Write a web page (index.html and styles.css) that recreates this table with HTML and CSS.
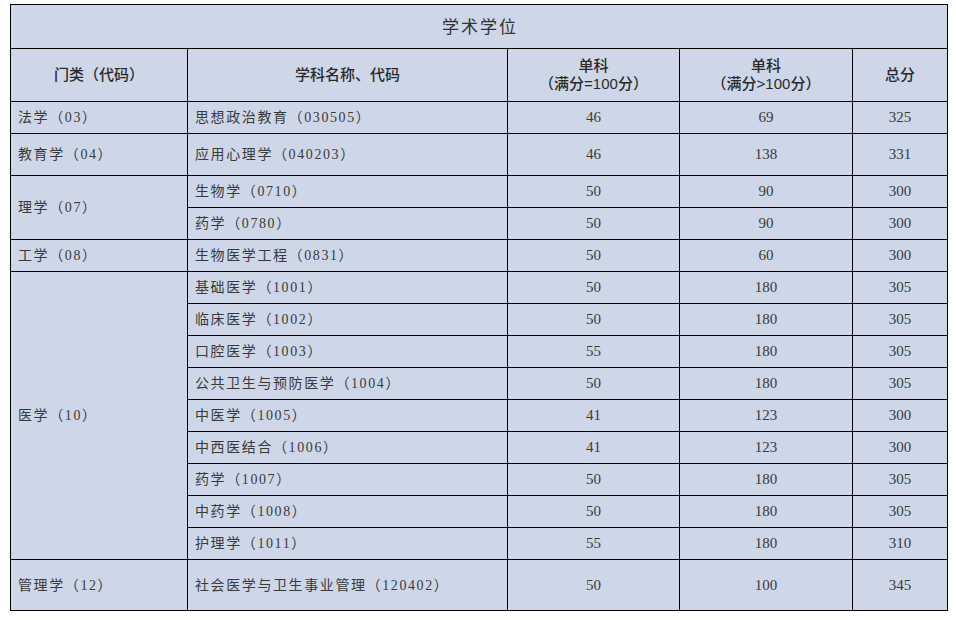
FILE: index.html
```html
<!DOCTYPE html>
<html lang="zh-CN">
<head>
<meta charset="utf-8">
<title>学术学位</title>
<link rel="stylesheet" href="styles.css">
</head>
<body>
<table class="grid">
  <colgroup>
    <col class="c1"><col class="c2"><col class="c3"><col class="c4"><col class="c5">
  </colgroup>
  <tr class="r-title"><td colspan="5" class="title">学术学位</td></tr>
  <tr class="r-head">
    <td class="hd">门类（代码）</td>
    <td class="hd">学科名称、代码</td>
    <td class="hd">单科<br>（满分=100分）</td>
    <td class="hd">单科<br>（满分&gt;100分）</td>
    <td class="hd">总分</td>
  </tr>
  <tr class="r"><td class="txt">法学（03）</td><td class="txt">思想政治教育（030505）</td><td class="num">46</td><td class="num">69</td><td class="num">325</td></tr>
  <tr class="r-tall"><td class="txt">教育学（04）</td><td class="txt">应用心理学（040203）</td><td class="num">46</td><td class="num">138</td><td class="num">331</td></tr>
  <tr class="r"><td class="txt" rowspan="2">理学（07）</td><td class="txt">生物学（0710）</td><td class="num">50</td><td class="num">90</td><td class="num">300</td></tr>
  <tr class="r"><td class="txt">药学（0780）</td><td class="num">50</td><td class="num">90</td><td class="num">300</td></tr>
  <tr class="r"><td class="txt">工学（08）</td><td class="txt">生物医学工程（0831）</td><td class="num">50</td><td class="num">60</td><td class="num">300</td></tr>
  <tr class="r"><td class="txt" rowspan="9">医学（10）</td><td class="txt">基础医学（1001）</td><td class="num">50</td><td class="num">180</td><td class="num">305</td></tr>
  <tr class="r"><td class="txt">临床医学（1002）</td><td class="num">50</td><td class="num">180</td><td class="num">305</td></tr>
  <tr class="r"><td class="txt">口腔医学（1003）</td><td class="num">55</td><td class="num">180</td><td class="num">305</td></tr>
  <tr class="r"><td class="txt">公共卫生与预防医学（1004）</td><td class="num">50</td><td class="num">180</td><td class="num">305</td></tr>
  <tr class="r"><td class="txt">中医学（1005）</td><td class="num">41</td><td class="num">123</td><td class="num">300</td></tr>
  <tr class="r"><td class="txt">中西医结合（1006）</td><td class="num">41</td><td class="num">123</td><td class="num">300</td></tr>
  <tr class="r"><td class="txt">药学（1007）</td><td class="num">50</td><td class="num">180</td><td class="num">305</td></tr>
  <tr class="r"><td class="txt">中药学（1008）</td><td class="num">50</td><td class="num">180</td><td class="num">305</td></tr>
  <tr class="r"><td class="txt">护理学（1011）</td><td class="num">55</td><td class="num">180</td><td class="num">310</td></tr>
  <tr class="r-last"><td class="txt">管理学（12）</td><td class="txt">社会医学与卫生事业管理（120402）</td><td class="num">50</td><td class="num">100</td><td class="num">345</td></tr>
</table>
</body>
</html>
```

FILE: styles.css
```css
html, body {
  margin: 0;
  padding: 0;
  background: #ffffff;
}

.grid {
  margin: 4px 0 0 10px;
  border-collapse: collapse;
  table-layout: fixed;
  width: 937px;
  background: #cdd7e8;
  font-family: "Liberation Serif", "Noto Sans CJK SC", serif;
  font-size: 14px;
  color: #3a3a3a;
}

.c1 { width: 177px; }
.c2 { width: 320px; }
.c3 { width: 172px; }
.c4 { width: 173px; }
.c5 { width: 95px; }

.grid td {
  border: 1px solid #000000;
  padding: 0;
  vertical-align: middle;
  line-height: 17px;
}

.r-title { height: 44px; }
.r-head { height: 53px; }
.r { height: 32px; }
.r-tall { height: 42px; }
.r-last { height: 51px; }

.title {
  text-align: center;
  font-family: "Noto Sans CJK SC", sans-serif;
  font-size: 17px;
  letter-spacing: 2px;
  text-indent: 2px;
  padding-bottom: 3px !important;
  color: #333333;
}

.hd {
  text-align: center;
  font-family: "Liberation Sans", "Noto Sans CJK SC", sans-serif;
  font-size: 15px;
  line-height: 18px !important;
  font-weight: 500;
  color: #2a2a2a;
}

.txt {
  text-align: left;
  padding-left: 7px !important;
  letter-spacing: 1.6px;
}

.num {
  text-align: center;
  font-size: 15px;
}
```
